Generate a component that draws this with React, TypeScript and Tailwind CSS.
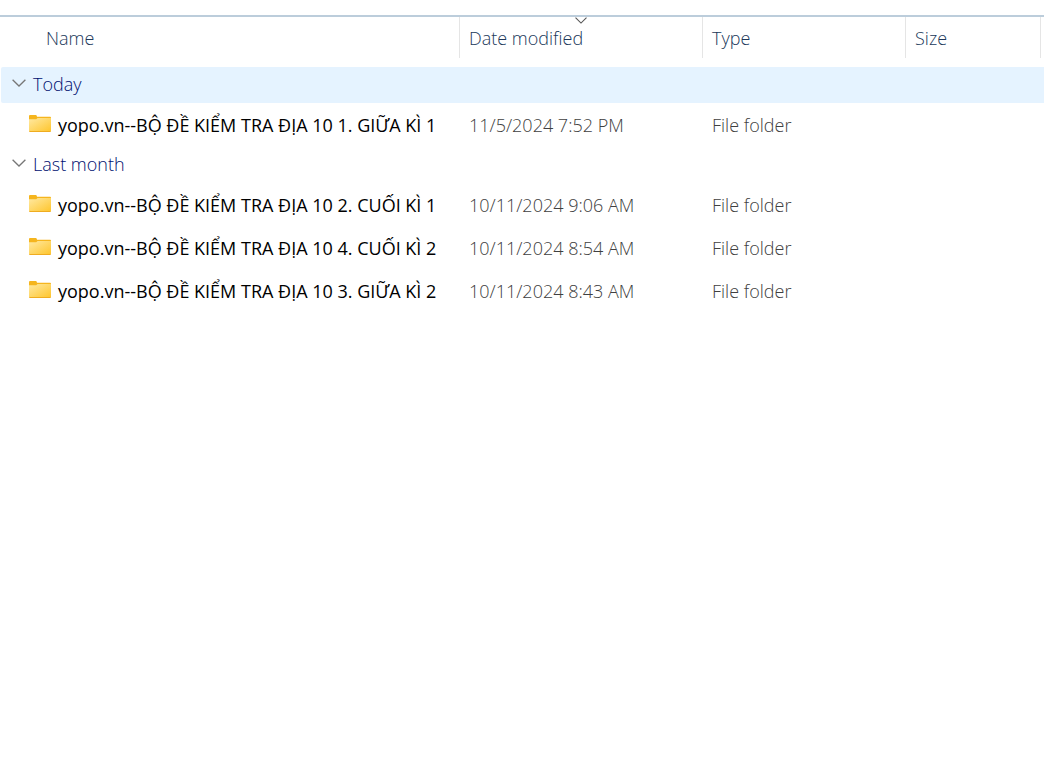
import React from 'react';

const groups = [
    {
        label: 'Today',
        selected: true,
        files: [{ name: 'yopo.vn--BỘ ĐỀ KIỂM TRA ĐỊA 10 1. GIỮA KÌ 1', modified: '11/5/2024 7:52 PM' }],
    },
    {
        label: 'Last month',
        selected: false,
        files: [
            { name: 'yopo.vn--BỘ ĐỀ KIỂM TRA ĐỊA 10 2. CUỐI KÌ 1', modified: '10/11/2024 9:06 AM' },
            { name: 'yopo.vn--BỘ ĐỀ KIỂM TRA ĐỊA 10 4. CUỐI KÌ 2', modified: '10/11/2024 8:54 AM' },
            { name: 'yopo.vn--BỘ ĐỀ KIỂM TRA ĐỊA 10 3. GIỮA KÌ 2', modified: '10/11/2024 8:43 AM' },
        ],
    },
];

const columns = [
    { label: 'Name', pad: 'pl-[46px]', sorted: false },
    { label: 'Date modified', pad: 'pl-[9px]', sorted: true },
    { label: 'Type', pad: 'pl-[9px]', sorted: false },
    { label: 'Size', pad: 'pl-[9px]', sorted: false },
];

const FolderIcon = () => (
    <svg width="22" height="17" viewBox="0 0 22 17" className="mb-0.5 shrink-0" aria-hidden="true">
        <defs>
            <linearGradient id="folder" x1="0" y1="0" x2="1" y2="1">
                <stop offset="0" stopColor="#ffe9a2" />
                <stop offset="1" stopColor="#fec62f" />
            </linearGradient>
        </defs>
        <path d="M0 1Q0 0 1 0H6.8Q8 0 8 1.8H21.2Q22 1.8 22 3V6H0Z" fill="#f5b51e" />
        <path d="M0 4.2H7.2L8.6 3H22V16H0Z" fill="url(#folder)" />
        <path d="M0 16H22Q22 17 21 17H1Q0 17 0 16Z" fill="#efac20" />
    </svg>
);

const Chevron = ({ className, width, height }: { className: string; width: number; height: number }) => (
    <svg width={width} height={height} viewBox="0 0 14 8" className={className} fill="none" stroke="currentColor" strokeWidth="1.3" aria-hidden="true">
        <path d="M.6 .7L7 7L13.4 .7" />
    </svg>
);

export default function App() {
    return (
        <main className="min-h-screen bg-white pt-[15px] font-['Open_Sans','Noto_Sans',sans-serif] text-[18px] leading-6">
            <table className="w-full table-fixed border-collapse border-t-2 border-[#bccddb] text-left font-light">
                <colgroup>
                    <col className="w-[460px]" />
                    <col className="w-[243px]" />
                    <col className="w-[203px]" />
                    <col className="w-[135px]" />
                    <col />
                </colgroup>
                <thead>
                    <tr className="h-[51px]">
                        {columns.map((col) => (
                            <th key={col.label} className="p-0 align-top font-light text-[#20385a]">
                                <button type="button" className={`relative flex h-[41px] w-full items-center border-r border-[#e5e5e5] text-left ${col.pad}`}>
                                    {col.label}
                                    {col.sorted && <Chevron width={12} height={7} className="absolute left-1/2 top-0 -translate-x-1/2 text-[#555]" />}
                                </button>
                            </th>
                        ))}
                        <td />
                    </tr>
                </thead>
                {groups.map((group) => (
                    <tbody key={group.label}>
                        <tr className="h-[37px]">
                            <th colSpan={5} className="p-0 pl-px align-top font-light">
                                <button
                                    type="button"
                                    aria-expanded="true"
                                    className={`flex h-9 w-full items-center gap-[7px] rounded-l-xs pb-0.5 pl-[11px] text-left text-[#001070] ${group.selected ? 'bg-[#e5f3ff]' : ''}`}
                                >
                                    <Chevron width={14} height={8} className="mb-0.5 shrink-0 text-[#777]" />
                                    {group.label}
                                </button>
                            </th>
                        </tr>
                        {group.files.map((file) => (
                            <tr key={file.name} className="h-[43px] whitespace-nowrap text-[#404040]">
                                <td className="p-0 pb-0.5 pl-[29px] font-normal text-black">
                                    <div className="flex items-center gap-[7px]">
                                        <FolderIcon />
                                        {file.name}
                                    </div>
                                </td>
                                <td className="p-0 pb-0.5 pl-[9px]">{file.modified}</td>
                                <td className="p-0 pb-0.5 pl-[9px]">File folder</td>
                                <td />
                                <td />
                            </tr>
                        ))}
                    </tbody>
                ))}
            </table>
        </main>
    );
}
